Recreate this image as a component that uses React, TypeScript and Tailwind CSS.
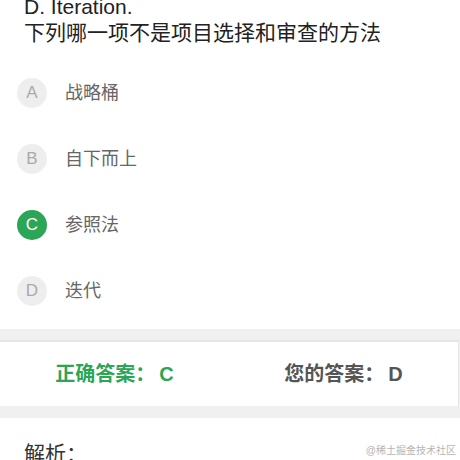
import React from 'react';

const font = { fontFamily: '"Liberation Sans", "Noto Sans CJK SC", sans-serif' };

const options = [
  { key: 'A', text: '战略桶' },
  { key: 'B', text: '自下而上' },
  { key: 'C', text: '参照法', correct: true },
  { key: 'D', text: '迭代' },
];

const App: React.FC = () => {
  return (
    <div className="relative w-[460px] h-[460px] overflow-hidden bg-white" style={font}>
      {/* Question */}
      <div className="px-6 -mt-[6px] text-[21px] leading-[26px] text-[#222]">
        <p>D. Iteration.</p>
        <p>下列哪一项不是项目选择和审查的方法</p>
      </div>

      {/* Options */}
      <div className="mt-[14px] pb-[5px]">
        {options.map((o) => (
          <div key={o.key} className="h-[66px] flex items-center pl-[17px]">
            <div
              className={
                o.correct
                  ? 'w-[30px] h-[30px] rounded-full bg-[#2ba556] text-white flex items-center justify-center text-[17px]'
                  : 'w-[30px] h-[30px] rounded-full bg-[#eeeeee] text-[#aaaaaa] flex items-center justify-center text-[17px]'
              }
            >
              {o.key}
            </div>
            <span className="ml-[18px] text-[18px] text-[#666666]">{o.text}</span>
          </div>
        ))}
      </div>

      {/* Answer */}
      <div className="bg-[#f0f0f0] pt-[11px] pb-[12px]">
        <div className="mr-px bg-white border-t-2 border-r border-[#e6e6e6] h-[66px] flex items-center">
          <div className="flex-1 text-center text-[20px] font-semibold text-[#2ba556]">
            正确答案：<span className="ml-[4px]">C</span>
          </div>
          <div className="flex-1 text-center text-[20px] font-semibold text-[#555555]">
            您的答案：<span className="ml-[4px]">D</span>
          </div>
        </div>
      </div>

      {/* Analysis */}
      <div className="px-6 pt-[23px] text-[21px] leading-[26px] text-[#333333]">解析：</div>

      <div className="absolute right-[4px] bottom-[4px] text-[10px] leading-none text-[#b5b5b5]">
        @稀土掘金技术社区
      </div>
    </div>
  );
};

export default App;
